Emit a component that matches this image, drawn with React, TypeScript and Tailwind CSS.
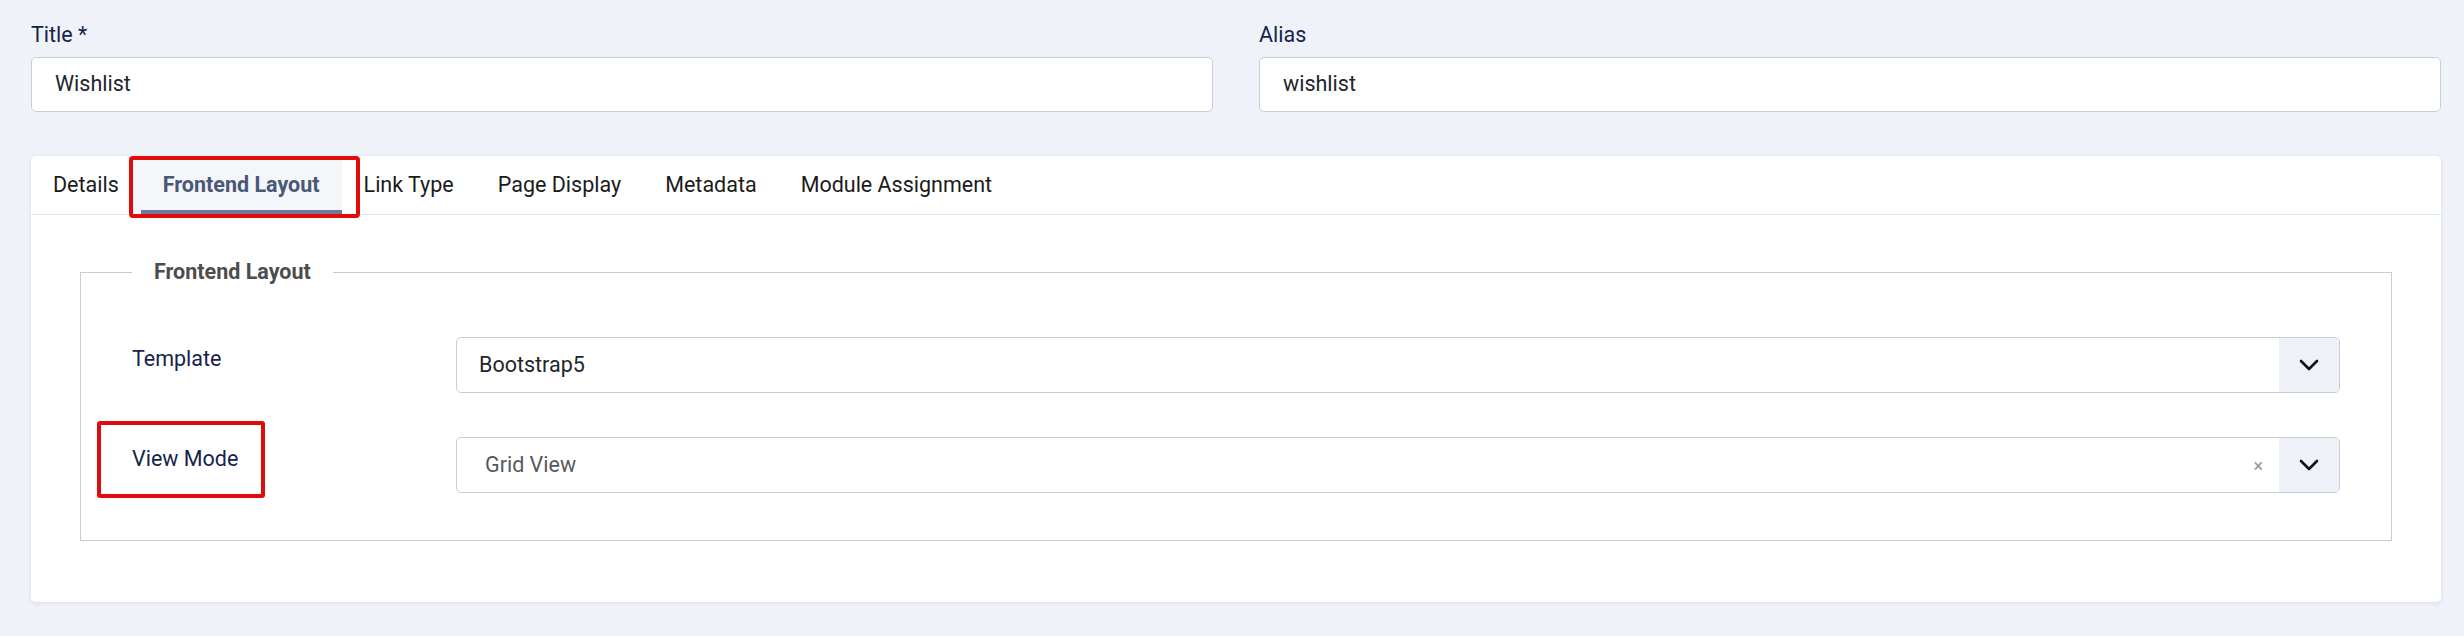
const tabs = ["Details", "Frontend Layout", "Link Type", "Page Display", "Metadata", "Module Assignment"];

function TextField({ label, value }: { label: string; value: string }) {
  return (
    <div>
      <label className="block text-[21.5px] leading-[30px] text-[#17244a]">{label}</label>
      <div className="mt-[7px] flex h-[55px] items-center rounded-[5px] border border-[#c8cdd8] bg-white pl-[23px] text-[21.5px] text-[#22262a]">
        {value}
      </div>
    </div>
  );
}

function Chevron() {
  return (
    <svg width="20" height="12" viewBox="0 0 20 12" fill="none">
      <polyline points="2,2 10,10 18,2" stroke="#111" strokeWidth="2.6" strokeLinecap="round" strokeLinejoin="round" />
    </svg>
  );
}

function SelectBox({ value, clearable }: { value: string; clearable?: boolean }) {
  return (
    <div className="flex h-[56px] flex-1 items-stretch overflow-hidden rounded-[5px] border border-[#c9ccd4] bg-white">
      <div
        className={`flex flex-1 items-center text-[21.5px] ${
          clearable ? "pl-[28px] text-[#555a60]" : "pl-[22px] text-[#22262a]"
        }`}
      >
        {value}
      </div>
      {clearable && (
        <span className="mr-[16px] flex items-center text-[18px] text-[#9a9a9a]">×</span>
      )}
      <div className="flex w-[60px] items-center justify-center bg-[#eef1f7]">
        <Chevron />
      </div>
    </div>
  );
}

export default function App() {
  return (
    <div className="min-h-[636px] bg-[#eff2f8] pt-[20px] pr-[23px] pl-[31px] font-['Roboto',sans-serif]">
      {/* Title / alias */}
      <div className="grid grid-cols-2 gap-x-[46px]">
        <TextField label="Title *" value="Wishlist" />
        <TextField label="Alias" value="wishlist" />
      </div>

      {/* Tabbed card */}
      <div className="mt-[44px] rounded-[5px] bg-white shadow-[0_1px_4px_rgba(40,60,110,0.12)]">
        <div className="flex h-[59px] items-stretch border-b border-[#e3e6ec]">
          {tabs.map((tab) =>
            tab === "Frontend Layout" ? (
              <div
                key={tab}
                className="relative -ml-[8px] flex items-center bg-[#f4f6fa] pr-[22px] pl-[30px] text-[21.5px] leading-[30px] font-bold text-[#4a5878]"
              >
                {tab}
                <span className="absolute right-0 bottom-0 left-[8px] h-[4px] bg-[#6d7a9b]" />
                <span className="absolute top-0 -left-[4px] h-[62px] w-[231px] rounded-[4px] border-[4px] border-[#e00b0b]" />
              </div>
            ) : (
              <div key={tab} className="flex items-center px-[22px] text-[21.5px] leading-[30px] text-[#1b1b1b]">
                {tab}
              </div>
            )
          )}
        </div>

        <div className="px-[49px] pt-[42px] pb-[61px]">
          <fieldset className="border border-[#c9ccd3] px-[51px] pt-[50px] pb-[47px]">
            <legend className="px-[22px] text-[21.5px] leading-[30px] font-bold text-[#4d4d4d]">Frontend Layout</legend>

            <div className="flex flex-col gap-[44px]">
              <div className="flex">
                <div className="w-[324px] pt-[7px] text-[21.5px] leading-[30px] text-[#17244a]">Template</div>
                <SelectBox value="Bootstrap5" />
              </div>
              <div className="flex">
                <div className="relative w-[324px] pt-[7px] text-[21.5px] leading-[30px] text-[#17244a]">
                  View Mode
                  <span className="absolute -top-[16px] -left-[35px] h-[77px] w-[168px] rounded-[3px] border-[4px] border-[#e00b0b]" />
                </div>
                <SelectBox value="Grid View" clearable />
              </div>
            </div>
          </fieldset>
        </div>
      </div>
    </div>
  );
}
